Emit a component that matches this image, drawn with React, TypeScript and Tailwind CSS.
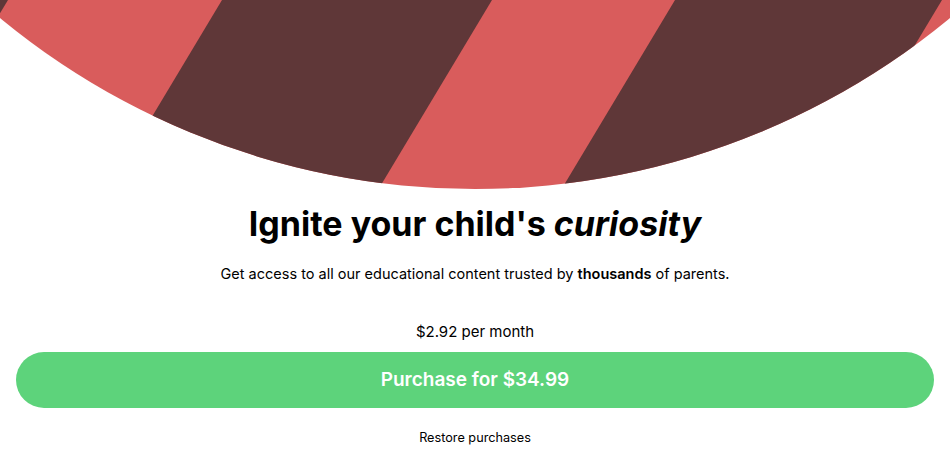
import React from 'react';

function StripeBanner() {
  return (
    <svg viewBox="0 0 950 190" className="block h-[190px] w-full">
      <defs>
        <clipPath id="arc">
          <circle cx="475" cy="-556" r="745" />
        </clipPath>
      </defs>
      <g clipPath="url(#arc)">
        <rect x="0" y="0" width="950" height="190" fill="#d95c5c" />
        <polygon points="-300,0 8,0 -106,190 -400,190" fill="#5f3738" />
        <polygon points="222,0 492,0 378,190 108,190" fill="#5f3738" />
        <polygon points="675,0 942,0 828,190 561,190" fill="#5f3738" />
      </g>
    </svg>
  );
}

export default function App() {
  return (
    <main className="flex min-h-screen flex-col bg-white text-black font-['Inter','Liberation_Sans',sans-serif]">
      <StripeBanner />

      <div className="flex flex-col items-center px-4">
        <h1 className="mt-[14px] text-[34px] font-bold leading-[40px]">
          Ignite your child's <em className="italic">curiosity</em>
        </h1>
        <p className="mt-5 text-[14.5px] leading-5">
          Get access to all our educational content trusted by <span className="font-semibold">thousands</span> of parents.
        </p>

        <p className="mt-[36px] text-[15px] leading-6">$2.92 per month</p>

        <button className="mt-[8px] flex h-14 w-full items-center justify-center rounded-full bg-[#5dd37b] text-[19px] font-semibold text-white">
          Purchase for $34.99
        </button>

        <button className="mt-[21px] text-[12.7px] leading-[18px]">Restore purchases</button>
      </div>
    </main>
  );
}
